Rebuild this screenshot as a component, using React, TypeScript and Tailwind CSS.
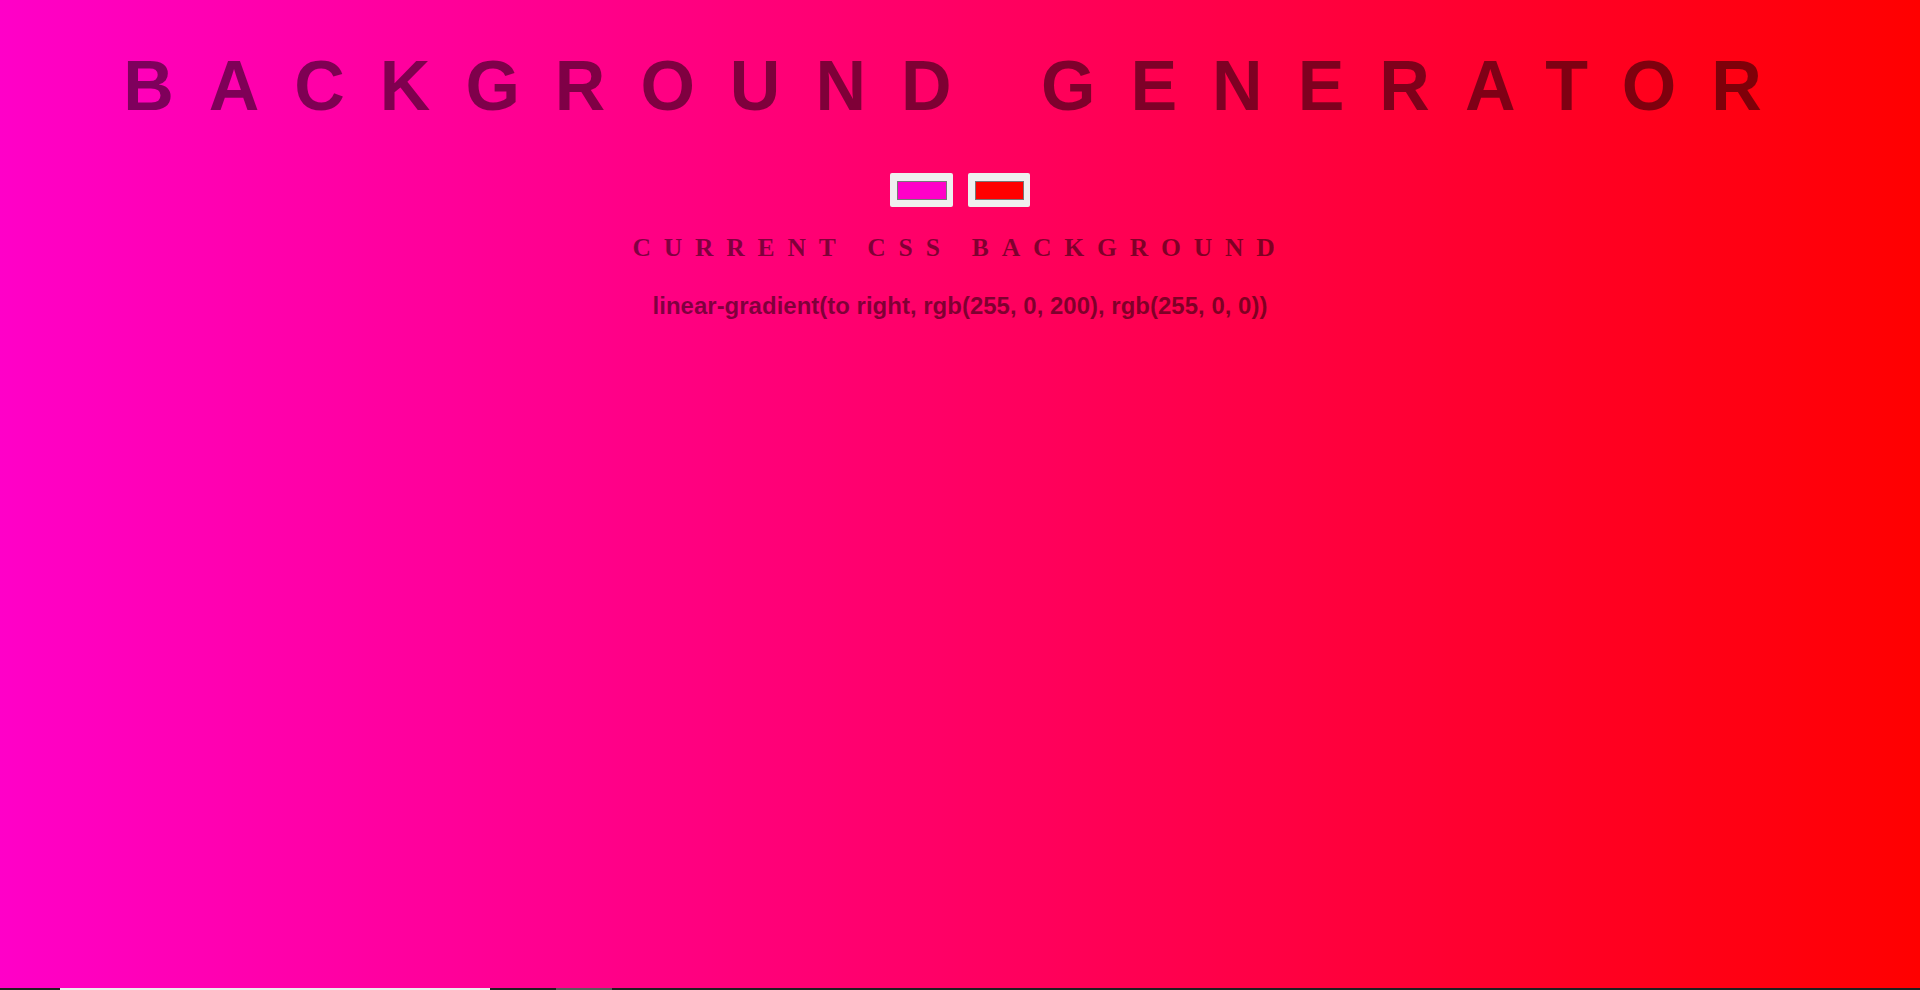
import React from "react";

export default function App() {
  return (
    <div className="h-[990px] w-full flex flex-col overflow-hidden">
      <div className="flex-1 flex flex-col items-center bg-[linear-gradient(to_right,#ff00c8,#ff0000)] text-black/50 text-center">
        <h1 className="mt-[46px] mb-[47px] w-full text-[70px] font-bold leading-[normal] tracking-[35px] uppercase font-['Liberation_Sans',Arial,sans-serif]">
          Background Generator
        </h1>
        <div className="flex justify-center gap-[15px]">
          <div className="w-[63px] h-[34px] bg-[#efefef] rounded-[2px] flex items-center justify-center">
            <div className="w-[50px] h-[19px] border border-[#777777] bg-[#ff00c8]" />
          </div>
          <div className="w-[62px] h-[34px] bg-[#efefef] rounded-[2px] flex items-center justify-center">
            <div className="w-[49px] h-[19px] border border-[#777777] bg-[#ff0000]" />
          </div>
        </div>
        <h3 className="mt-[26px] w-full text-[25.6px] font-bold leading-[normal] tracking-[0.5em] uppercase font-['Liberation_Serif','Times_New_Roman',serif]">
          Current CSS Background
        </h3>
        <h3 className="mt-[29px] w-full text-[24px] font-bold leading-[normal] font-['Liberation_Sans',Arial,sans-serif]">
          linear-gradient(to right, rgb(255, 0, 200), rgb(255, 0, 0))
        </h3>
      </div>
      <div className="h-[2px] flex shrink-0 bg-[#1f1f1f]">
        <div className="w-[60px] bg-[#1f1f1f]" />
        <div className="w-[430px] bg-[#ececec]" />
        <div className="w-[66px] bg-[#1f1f1f]" />
        <div className="w-[56px] bg-[#5a5a5a]" />
        <div className="flex-1 bg-[#1f1f1f]" />
      </div>
    </div>
  );
}
